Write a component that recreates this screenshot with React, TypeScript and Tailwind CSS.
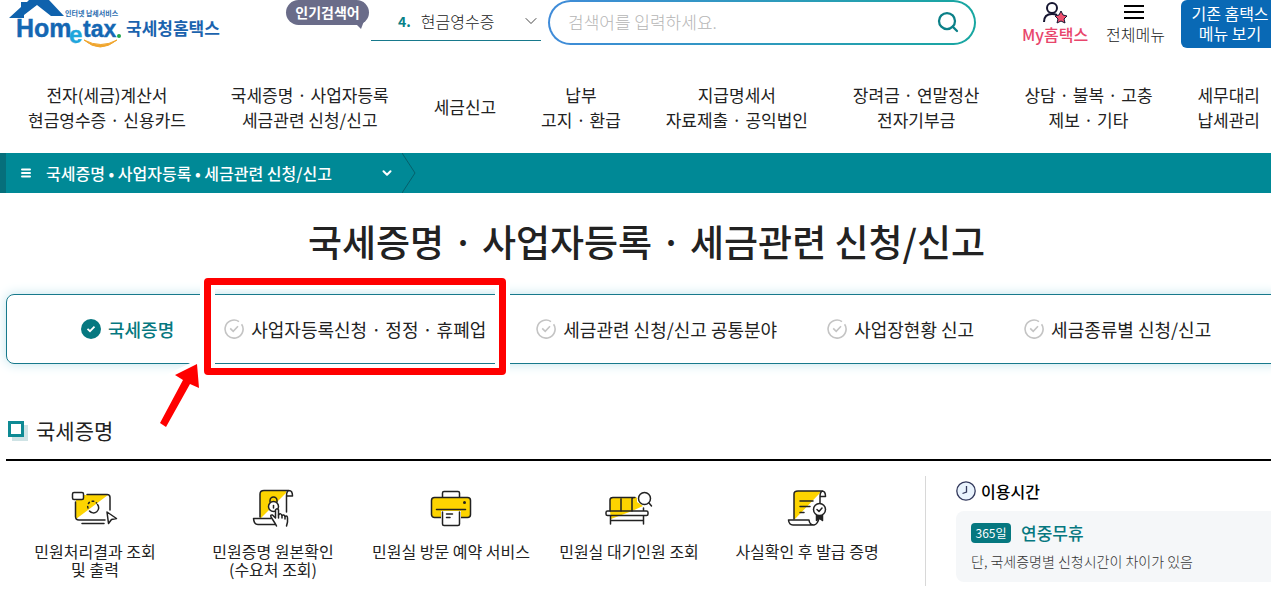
import { ReactNode } from "react";
import { ChevronDown, Menu, Search } from "lucide-react";

const YELLOW = "#fdd400";
const INK = "#222222";

// 상단 메뉴 (한 항목당 한 줄 또는 두 줄)
const mainMenus: string[][] = [
  ["전자(세금)계산서", "현금영수증 · 신용카드"],
  ["국세증명 · 사업자등록", "세금관련 신청/신고"],
  ["세금신고"],
  ["납부", "고지 · 환급"],
  ["지급명세서", "자료제출 · 공익법인"],
  ["장려금 · 연말정산", "전자기부금"],
  ["상담 · 불복 · 고충", "제보 · 기타"],
  ["세무대리", "납세관리"],
];

const tabs = [
  "국세증명",
  "사업자등록신청 · 정정 · 휴폐업",
  "세금관련 신청/신고 공통분야",
  "사업장현황 신고",
  "세금종류별 신청/신고",
];

function Logo() {
  return (
    <svg width="216" height="50" viewBox="0 0 216 50" role="img" aria-label="Hometax 국세청홈택스">
      <path d="M1 18 L13 7 V2 H19 L21 0 H41 L56 16 H43 L29 5 L16 15 V18 Z" fill="#0f62ad" />
      <text x="57" y="16" fontSize="7" fontWeight="700" fill="#2a6db0">인터넷 납세서비스</text>
      <g fontFamily="'Liberation Sans', sans-serif" fontWeight="700" fill="#1467b3" stroke="#1467b3" strokeWidth="0.4">
        <text x="8" y="37" fontSize="25">Hom</text>
        <text x="61" y="43" fontSize="24" fill="#1fa6dc" stroke="#1fa6dc">e</text>
        <text x="75" y="37" fontSize="23">tax</text>
      </g>
      <circle cx="111" cy="36" r="2" fill="#1ea54b" />
      <path d="M76 40 Q92 54 109 40 Q93 49 76 40 Z" fill="#f0a52c" stroke="#f0a52c" />
      <text x="118" y="35" fontSize="17" fontWeight="700" fill="#1b63ae">국세청홈택스</text>
    </svg>
  );
}

function MyIcon() {
  return (
    <svg width="26" height="22" viewBox="0 0 26 22" fill="none" stroke="#151530" strokeWidth="2">
      <circle cx="10" cy="6" r="5" />
      <path d="M2 20 C2 14 5 12 10 12 C12 12 13 12 15 13" />
      <path
        d="M19 9 L21 13 L25 14 L22 17 L23 21 L19 19 L15 21 L16 17 L13 14 L17 13 Z"
        fill="#f0506e"
        strokeWidth="1"
        strokeLinejoin="round"
      />
    </svg>
  );
}

function TabMark({ active }: { active: boolean }) {
  return (
    <svg width="20" height="20" viewBox="0 0 20 20" fill="none" className="shrink-0">
      {active ? (
        <>
          <circle cx="10" cy="10" r="10" fill="#067880" />
          <path d="M6.5 9.8 L9 12.2 L13.5 7.6" stroke="#fff" strokeWidth="1.8" />
        </>
      ) : (
        <g stroke="#c4c4c4" strokeWidth="1.6">
          <path d="M15 2.6 A9 9 0 1 0 17.6 5.2" />
          <path d="M6.2 9.4 L9.2 12.4 L14 7.2" />
        </g>
      )}
    </svg>
  );
}

function ServiceSvg({ children }: { children: ReactNode }) {
  return (
    <svg
      width="48"
      height="40"
      viewBox="0 0 48 40"
      fill="none"
      stroke={INK}
      strokeWidth="1.5"
      strokeLinecap="round"
      strokeLinejoin="round"
    >
      {children}
    </svg>
  );
}

const services: { lines: string[]; icon: ReactNode }[] = [
  {
    lines: ["민원처리결과 조회", "및 출력"],
    icon: (
      <ServiceSvg>
        <path d="M5 31 V7 H37 Z" fill={YELLOW} stroke="none" />
        <path d="M16 6.5 H36 Q39 6.5 39 9.5 V22 M34 32 H8 Q4.5 32 4.5 28.5 V14" />
        <rect x="1.5" y="4.5" width="11" height="7" rx="1.5" fill="#fff" />
        <path d="M26.5 16.5 A5 5 0 0 1 18.5 23" />
        <path d="M17 20 A5 5 0 0 1 25.5 15" strokeDasharray="1.5 3" />
        <path d="M36 24 L45.5 30.5 L40.5 31.5 L37.5 35.5 Z" fill="#fff" />
        <path d="M11 35.5 H33" />
      </ServiceSvg>
    ),
  },
  {
    lines: ["민원증명 원본확인", "(수요처 조회)"],
    icon: (
      <ServiceSvg>
        <path d="M11 30 V6 Q11 2.5 15 2.5 H37 V5 L12 30 Z" fill={YELLOW} stroke="none" />
        <path d="M11 29 V6 Q11 2.5 15 2.5 H40 Q43.5 2.5 43.5 8 H37.5 V24 M37.5 8 Q37.5 3 40 2.5" />
        <path d="M22 30.5 H4.5 Q5 36.5 9 36.5 H26" />
        <path d="M21 14 V12.5 A3.5 3.5 0 0 1 28 12.5 V14" />
        <circle cx="24.5" cy="18.5" r="5" fill="#fff" />
        <path d="M24.5 17.5 V20" />
        <path
          d="M27.5 38 Q26 35 22 29 Q21 26.5 23.5 27 L26.5 30 V22 Q28 19.5 29.5 22 V27 Q32 24.5 33 27.5 Q35 26 36 28.5 Q38.500 27 38.5 30 V34 L37.5 38"
          fill="#fff"
        />
        <path d="M29.5 27 V30 M33 27.5 V30 M36 28.5 V31" />
      </ServiceSvg>
    ),
  },
  {
    lines: ["민원실 방문 예약 서비스"],
    icon: (
      <ServiceSvg>
        <path d="M15.5 9.5 V5 Q15.5 3.5 17 3.5 H31 Q32.5 3.5 32.5 5 V9.5" fill="#fff" />
        <rect x="4.5" y="9.5" width="39" height="20" rx="3" fill={YELLOW} />
        <path d="M14 23 H34 V31 H14 Z" fill="#fff" stroke="none" />
        <path d="M9.5 21.5 H38.5" />
        <circle cx="37.5" cy="14.5" r="1.5" fill={INK} stroke="none" />
        <path d="M15.5 24 V36 Q15.5 37.5 17 37.5 H31 Q32.5 37.5 32.5 36 V24" fill="#fff" />
        <path d="M19.5 26 H25.5 M19.5 29.5 H23" />
      </ServiceSvg>
    ),
  },
  {
    lines: ["민원실 대기인원 조회"],
    icon: (
      <ServiceSvg>
        <path d="M5 23 V12 Q5 9.5 8 9.5 H32 V14 L38 18 L27 23 L6 31 Z" fill={YELLOW} stroke="none" />
        <path d="M5 23 V12 Q5 9.5 8 9.5 H30 M16 23 V11 M27 23 V11 Q27 9.5 29 9.5 M38.5 20 V23" />
        <path d="M20 28 H42 V23 H30 Z" fill="#fff" stroke="none" />
        <rect x="1" y="23" width="42" height="4.5" rx="1.5" />
        <path d="M5.5 28 V36 M38.5 28 V36 M5.5 32.5 H38.5" />
        <circle cx="39.5" cy="10.5" r="6" fill="#fff" />
        <path d="M44 15 L46.5 18" />
      </ServiceSvg>
    ),
  },
  {
    lines: ["사실확인 후 발급 증명"],
    icon: (
      <ServiceSvg>
        <path d="M11 31 V6 Q11 3 15 3 H37 V5 L12 31 Z" fill={YELLOW} stroke="none" />
        <path d="M11 31 V6 Q11 3 15 3 H39 Q42.5 3 42.5 8.5 H37 V15 M37 8.5 Q37 4 39.5 3" />
        <path d="M5.5 32 H26 Q26.5 37 31 37 H10 Q6 37 5.5 32 Z M31 37 Q35 36 36 30" fill="#fff" />
        <path d="M17 13 H30 M17 18.5 H27 M17 24.5 H21" />
        <path d="M33.5 27 V32.5 L36.5 30.5 L39.5 32.5 V27" fill={INK} />
        <circle cx="36.5" cy="21.5" r="6" fill="#fff" />
        <path d="M34 21.5 L36 23.5 L39 20" />
      </ServiceSvg>
    ),
  },
];

function Header() {
  return (
    <header className="flex h-[60px] items-start pl-2">
      <a href="#" className="shrink-0">
        <Logo />
      </a>

      <div className="relative ml-[62px] h-[25px] w-[83px] shrink-0 rounded-full bg-[#6a6c89] text-center text-sm leading-6 font-bold text-white">
        인기검색어
        <svg width="10" height="8" viewBox="0 0 10 8" className="absolute right-1 -bottom-1">
          <path d="M0 2 L9 0 L6 8 Z" fill="#6a6c89" />
        </svg>
      </div>

      <button
        type="button"
        className="ml-[2px] flex h-[41px] w-[170px] shrink-0 items-center border-b border-[#17798c] pt-[2px] pl-[27px] text-[#222222]"
      >
        <strong className="mr-[10px] text-sm text-[#078087]">4.</strong>
        <span className="font-light">현금영수증</span>
        <ChevronDown className="ml-auto size-5" strokeWidth={1} />
      </button>

      <div className="ml-[7px] h-[45px] min-w-0 flex-1 rounded-full bg-linear-to-r from-[#3f8bd9] to-[#16a6a0] p-[2px]">
        <div className="flex h-full items-center rounded-full bg-white pr-[14px] pb-[2px] pl-[18px]">
          <input
            type="text"
            aria-label="검색어"
            placeholder="검색어를 입력하세요."
            className="min-w-0 flex-1 text-[17px] font-light outline-none placeholder:text-[#b5b5b5]"
          />
          <button type="button" aria-label="검색">
            <Search className="size-6 text-[#0b8088]" strokeWidth={2.25} />
          </button>
        </div>
      </div>

      <a href="#" className="ml-[46px] flex shrink-0 flex-col items-center pt-[2px] leading-5 font-medium text-[#e8466c]">
        <MyIcon />
        My홈택스
      </a>
      <a href="#" className="ml-[18px] flex shrink-0 flex-col items-center leading-5 font-light text-[#222222]">
        <svg width="24" height="24" viewBox="0 0 24 24" className="mr-1">
          <path d="M2 6 H22 M2 12 H22 M2 18 H22" stroke="#000" strokeWidth="2" />
        </svg>
        전체메뉴
      </a>
      <button
        type="button"
        className="ml-4 h-12 w-[90px] shrink-0 rounded-l-md bg-[#0969b5] pb-[2px] pl-2 leading-5 whitespace-nowrap text-white"
      >
        기존 홈택스
        <br />
        메뉴 보기
      </button>
    </header>
  );
}

// 강조용 빨간 테두리와 화살표
function Highlight() {
  return (
    <>
      <div className="pointer-events-none absolute -top-4 left-[204px] h-[97px] w-[302px] rounded-sm border-[7px] border-[#ff0000] shadow-[0_0_0_4px_#fff,inset_0_0_0_4px_#fff]" />
      <svg width="48" height="72" viewBox="0 0 48 72" className="pointer-events-none absolute top-[66px] left-[156px]">
        <path
          d="M41 4 L19 15 L27 20 L4 63 L10 67 L34 24 L43 28 Z"
          fill="#ff0000"
          stroke="#fff"
          strokeWidth="8"
          paintOrder="stroke"
        />
      </svg>
    </>
  );
}

export default function App() {
  return (
    <div className="overflow-hidden bg-white font-['Noto_Sans_CJK_KR',sans-serif] text-[#222222]">
      <Header />

      <nav className="flex h-[93px] items-center justify-between pr-[11px] pl-7 text-center text-[17px] leading-[25px] whitespace-nowrap">
        {mainMenus.map((lines) => (
          <a key={lines[0]} href="#">
            {lines.map((line) => (
              <span key={line} className="block">
                {line}
              </span>
            ))}
          </a>
        ))}
      </nav>

      <div className="flex h-10 border-l-[6px] border-[#066f7b] bg-[#008996] text-white">
        <button type="button" className="flex w-[396px] items-center pr-2 pl-[14px] font-medium">
          <Menu className="size-3" strokeWidth={4} />
          <span className="ml-[14px]">국세증명 • 사업자등록 • 세금관련 신청/신고</span>
          <ChevronDown className="ml-auto size-[14px]" strokeWidth={3.5} />
        </button>
        <svg width="14" height="40" viewBox="0 0 14 40" fill="none">
          <path d="M0 0 L13 20 L0 40" stroke="#06606b" />
        </svg>
      </div>

      <h1 className="pt-5 pb-[2px] pl-[22px] text-center text-[37px] leading-[56px] font-medium whitespace-nowrap">
        국세증명 · 사업자등록 · 세금관련 신청/신고
      </h1>

      <div className="relative mt-[23px]">
        <div className="-mr-3 ml-[6px] flex h-[70px] items-center gap-[50px] rounded-lg border border-[#17798c] pl-[74px] text-lg whitespace-nowrap shadow-[0_0_12px_#bfe3ec]">
          {tabs.map((tab, i) => (
            <button key={tab} type="button" className="flex items-center gap-[7px]">
              <TabMark active={i === 0} />
              <span className={i === 0 ? "font-medium text-[#067880]" : ""}>{tab}</span>
            </button>
          ))}
        </div>
        <Highlight />
      </div>

      <main className="mt-[50px] pl-[6px]">
        <h2 className="flex h-[47px] items-start gap-3 border-b-2 border-black pl-[2px] text-[21px] leading-8">
          <span className="mt-[7px] size-4 border-3 border-[#0e8a94] bg-white shadow-[4px_4px_0_#cfe3e5]" />
          국세증명
        </h2>

        <div className="flex pt-[15px]">
          <ul className="grid flex-1 grid-cols-5 pt-3">
            {services.map(({ lines, icon }) => (
              <li key={lines[0]}>
                <a href="#" className="flex flex-col items-center leading-[18px] whitespace-nowrap">
                  {icon}
                  <span className="mt-[14px] text-center">
                    {lines.map((line) => (
                      <span key={line} className="block">
                        {line}
                      </span>
                    ))}
                  </span>
                </a>
              </li>
            ))}
          </ul>

          <aside className="ml-[29px] h-[110px] w-[346px] shrink-0 border-l border-[#d8d8d8] pl-[30px]">
            <h3 className="flex items-center gap-[5px] pt-[3px] leading-6 font-medium text-black">
              <svg width="20" height="20" viewBox="0 0 20 20" fill="none" stroke="#33395c" strokeWidth="1.3">
                <circle cx="10" cy="10" r="9.2" fill="#e9f3fd" />
                <path d="M10.5 5 V11 L6.5 12.5" />
              </svg>
              이용시간
            </h3>
            <div className="mt-2 -mr-2 h-[71px] rounded-lg bg-[#f5f7f9] pt-[10px] pl-[15px]">
              <p className="flex items-center gap-[10px] text-[17px] leading-6 font-medium text-[#067880]">
                <span className="h-5 w-10 rounded bg-[#067880] text-center text-xs leading-5 font-normal text-white">
                  365일
                </span>
                연중무휴
              </p>
              <p className="mt-[6px] text-sm font-light text-[#333333]">단, 국세증명별 신청시간이 차이가 있음</p>
            </div>
          </aside>
        </div>
      </main>
    </div>
  );
}
